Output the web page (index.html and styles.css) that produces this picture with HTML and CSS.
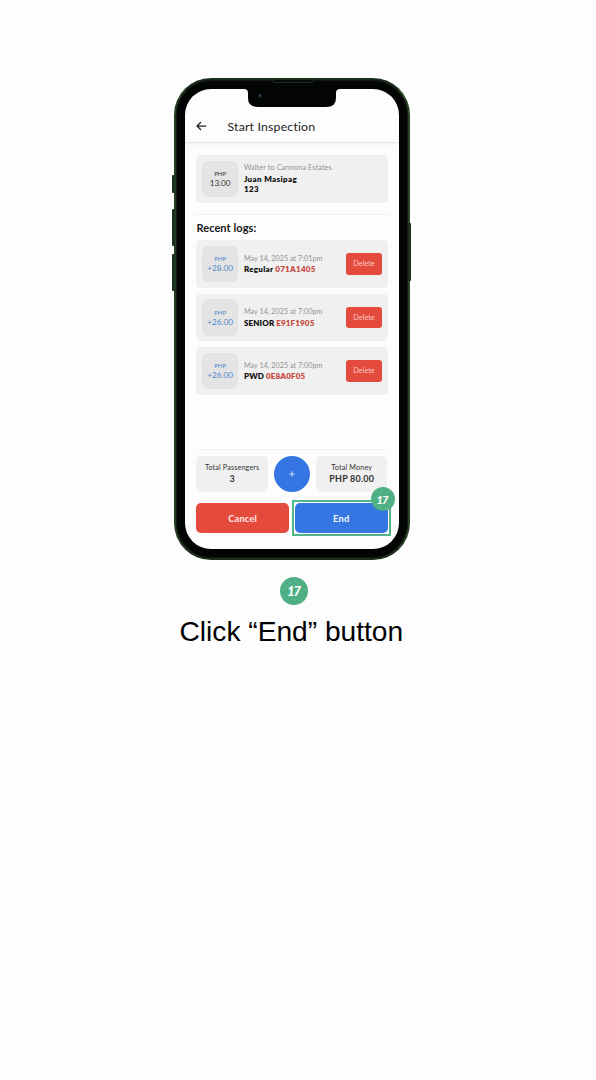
FILE: index.html
```html
<!DOCTYPE html>
<html lang="en">
<head>
<meta charset="utf-8">
<title>Start Inspection</title>
<link rel="stylesheet" href="styles.css">
</head>
<body>
<main class="page">
  <div class="phone">
    <i class="key mute"></i><i class="key up"></i><i class="key down"></i><i class="key power"></i>
    <i class="speaker"></i>
    <div class="notch"><svg width="88" height="18" viewBox="0 0 88 18"><path d="M-4 0H92Q88 0 88 4V9Q88 18 78 18H10Q0 18 0 9V4Q0 0-4 0Z" fill="#030404"/><circle cx="12.2" cy="6.7" r="2" fill="#101c28"/><circle cx="12.2" cy="6.7" r=".9" fill="#38566e"/></svg></div>
    <div class="screen">
      <header class="bar">
        <svg class="back" width="11" height="10" viewBox="0 0 11 10"><path d="M10.2 5H1M5 1 1 5l4 4" fill="none" stroke="#222" stroke-width="1.25"/></svg>
        <h1 class="title">Start Inspection</h1>
      </header>
      <section class="content">
        <div class="card trip">
          <div class="fare"><span class="cur">PHP</span><span class="amt">13.00</span></div>
          <div class="info"><span class="meta route">Walter to Carmona Estates</span><b class="name">Juan Masipag</b><b class="name">123</b></div>
        </div>
        <h2 class="heading">Recent logs:</h2>
        <div class="logs">
          <div class="card">
            <div class="fare blue"><span class="cur">PHP</span><span class="amt">+28.00</span></div>
            <div class="info"><span class="meta">May 14, 2025 at 7:01pm</span><b class="name">Regular <span class="code">071A1405</span></b></div>
            <button class="delete">Delete</button>
          </div>
          <div class="card">
            <div class="fare blue"><span class="cur">PHP</span><span class="amt">+26.00</span></div>
            <div class="info"><span class="meta">May 14, 2025 at 7:00pm</span><b class="name tight">SENIOR <span class="code">E91F1905</span></b></div>
            <button class="delete">Delete</button>
          </div>
          <div class="card">
            <div class="fare blue"><span class="cur">PHP</span><span class="amt">+26.00</span></div>
            <div class="info"><span class="meta">May 14, 2025 at 7:00pm</span><b class="name tight">PWD <span class="code">0E8A0F05</span></b></div>
            <button class="delete">Delete</button>
          </div>
        </div>
      </section>
      <footer class="footer">
        <div class="totals">
          <div class="stat"><span class="label">Total Passengers</span><b class="value">3</b></div>
          <button class="add"><svg width="6" height="6" viewBox="0 0 6 6"><path d="M3 .3v5.4M.3 3h5.4" stroke="#dce8ff" stroke-width=".9"/></svg></button>
          <div class="stat"><span class="label">Total Money</span><b class="value">PHP 80.00</b></div>
        </div>
        <div class="actions">
          <button class="action cancel">Cancel</button>
          <div class="end-wrap"><button class="action end">End</button><span class="badge pin">17</span></div>
        </div>
      </footer>
    </div>
  </div>
  <span class="badge step">17</span>
  <p class="caption">Click “End” button</p>
</main>
</body>
</html>
```
FILE: styles.css
```css
* { box-sizing: border-box; }
body { margin: 0; background: #fdfdfd; font-family: Lato, "Open Sans", sans-serif; }
h1, h2, p { margin: 0; }
button { border: 0; padding: 0; font-family: inherit; }
.page { min-height: 1080px; padding: 78px 0 0 174px; }

.phone {
  position: relative; width: 235.5px; height: 482px; padding: 9px;
  border: 2px solid; border-color: #1b2d1c #2a4427 #1e301c #263d25;
  border-radius: 37px; background: #030404; box-shadow: inset 0 0 0 1px #11180f;
}
.key { position: absolute; width: 3px; background: #1c3020; border-radius: 1px; }
.mute { left: -4px; top: 95px; height: 18px; }
.up { left: -4px; top: 129px; height: 37px; }
.down { left: -4px; top: 174px; height: 37px; }
.power { right: -3.5px; top: 143px; height: 58px; }
.speaker { position: absolute; left: 96px; top: -1px; width: 42px; height: 4px; background: #070b07; border: 1px solid #1c2b1a; border-radius: 0 0 2px 2px; }
.notch { position: absolute; z-index: 2; left: 72px; top: 9px; height: 18px; }
.notch svg { display: block; overflow: visible; }

.screen { display: flex; flex-direction: column; width: 213.5px; height: 460px; border-radius: 26px; background: #fdfdfd; }
.bar { display: flex; height: 54px; padding: 21px 0 0 11px; align-items: center; gap: 20.5px; border-bottom: 1px solid #e7e7e7; box-shadow: 0 1px 2px #00000010; }
.back { flex: none; }
.title { font-size: 12.3px; line-height: 16px; font-weight: 400; color: #222; letter-spacing: .18px; white-space: nowrap; padding-top: 1px; }
.content { padding: 12px 11px 0 11.4px; }
.card { display: flex; align-items: center; height: 47.5px; padding: 0 5.5px; border-radius: 5px; background: #f0f0f0; }
.fare { display: flex; flex: none; flex-direction: column; align-items: center; justify-content: center; width: 36.5px; height: 36.5px; border-radius: 6px; background: #e4e4e4; color: #333; }
.cur { font-size: 6px; line-height: 9px; }
.amt { font-size: 8.2px; line-height: 10px; }
.blue { color: #4d86cd; }
.info { display: flex; flex: 1; flex-direction: column; padding-left: 5.5px; white-space: nowrap; }
.meta { font-size: 7.2px; line-height: 10.5px; color: #929292; letter-spacing: .03px; padding-top: .5px; }
.route { letter-spacing: .13px; }
.name { font-size: 8px; line-height: 10.5px; color: #111; font-weight: 800; letter-spacing: .28px; }
.tight { letter-spacing: .15px; }
.trip .name { letter-spacing: .36px; }
.code { color: #c7483e; }
.delete { width: 36px; height: 21.5px; border-radius: 3px; background: #e54b3c; color: #f8c9c3; font-size: 7.3px; }
.heading { margin-top: 11.5px; border-top: 1px solid #f0f0f0; padding-top: 6px; font-size: 11px; line-height: 14px; color: #161616; font-weight: 700; letter-spacing: .08px; }
.logs { display: flex; flex-direction: column; gap: 6px; margin-top: 5.1px; }

.footer { margin: auto 11px 15.6px 11.4px; border-top: 1px solid #f1f1f1; padding-top: 6px; }
.totals { display: flex; justify-content: space-between; }
.stat { display: flex; flex-direction: column; align-items: center; justify-content: center; width: 71.5px; height: 36px; border-radius: 5px; background: #f0f0f0; color: #333; white-space: nowrap; }
.label { font-size: 7.2px; line-height: 10px; letter-spacing: .15px; padding-top: 1px; }
.value { font-size: 9px; line-height: 12px; letter-spacing: .2px; }
.add { display: grid; place-items: center; width: 36px; height: 36px; border-radius: 50%; background: #3576e2; }
.actions { display: flex; justify-content: space-between; margin-top: 11.5px; }
.action { width: 92.5px; height: 30px; border-radius: 5px; color: #f5f7ff; font-size: 9.4px; font-weight: 700; letter-spacing: .12px; display: block; }
.cancel { background: #e54b3c; color: #ffe8e4; }
.end { background: #3576e2; }
.end-wrap { position: relative; outline: 2px solid #50b58a; outline-offset: 1.5px; }
.badge { display: grid; place-items: center; border-radius: 50%; background: repeating-linear-gradient(45deg, #459c7980 0 1px, transparent 1px 5px), repeating-linear-gradient(-45deg, #459c7980 0 1px, transparent 1px 5px), #51b288; color: #fff; font-weight: 900; font-style: italic; letter-spacing: -1px; padding-right: 1px; }
.pin { position: absolute; right: -7px; top: -16px; width: 24px; height: 24px; font-size: 11px; }
.step { width: 28px; height: 28px; margin: 17px 0 0 106px; font-size: 13px; }
.caption { margin: 11px 0 0 5.5px; font: 28.15px/32px "Liberation Sans", Arial, sans-serif; color: #000; white-space: nowrap; }
```
